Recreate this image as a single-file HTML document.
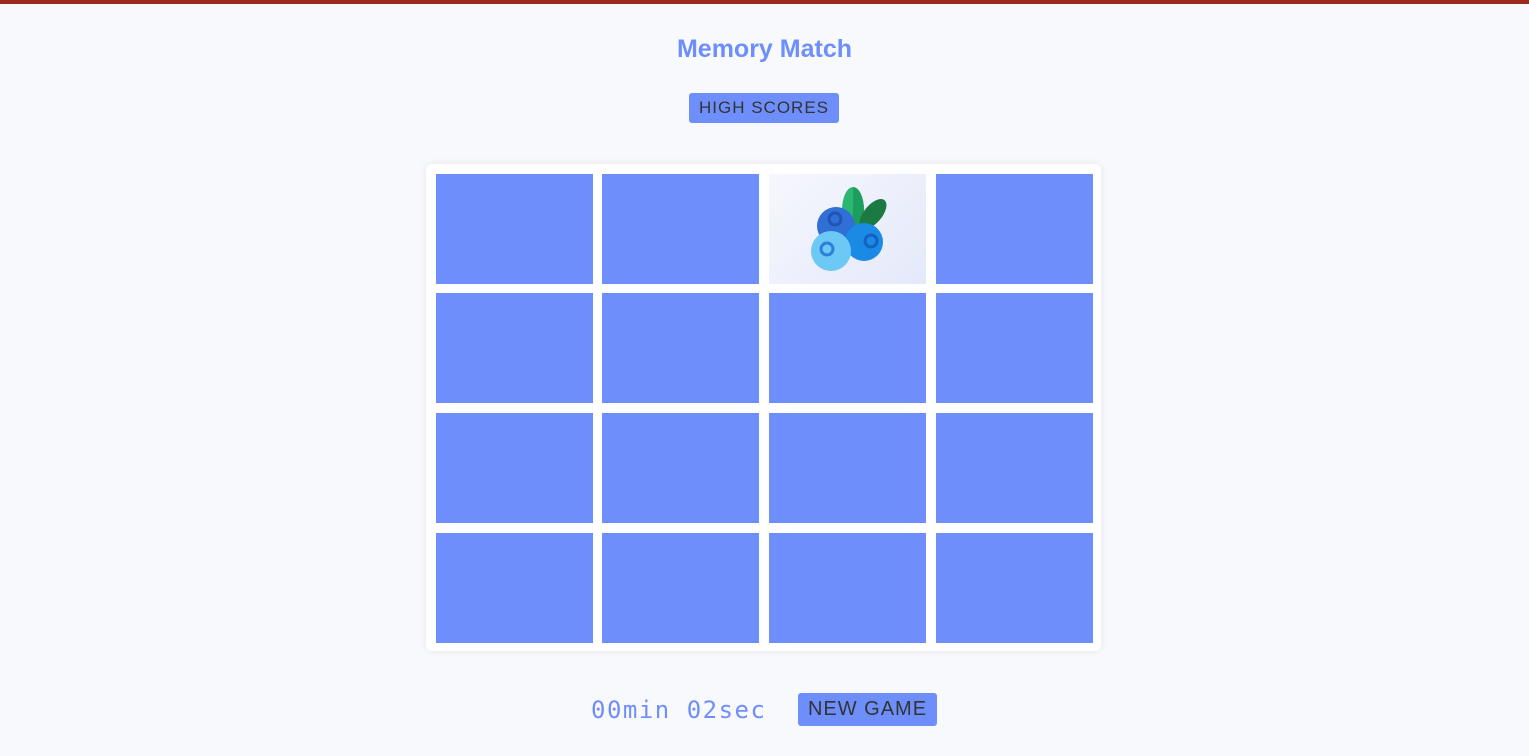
<!DOCTYPE html>
<html><head><meta charset="utf-8"><style>
body{margin:0;width:1529px;height:756px;background:#f8f9fd;font-family:"Liberation Sans",sans-serif;position:relative;overflow:hidden}
.top{position:absolute;left:0;top:0;width:100%;height:4px;background:#9a2b1d}
h1{position:absolute;top:35px;left:0;width:100%;text-align:center;margin:0;font-size:25px;color:#6e8efb;font-weight:bold}
.btn{position:absolute;background:#6e8efb;color:#333;border-radius:3px;text-align:center;letter-spacing:1px}
.board{position:absolute;left:426px;top:164px;width:675px;height:487px;background:#fff;border-radius:6px;box-shadow:0 0 8px rgba(0,0,0,.08)}
.c{position:absolute;width:157px;height:110px;background:#6e8efb}
.timer{position:absolute;left:591px;top:696px;font-family:"DejaVu Sans Mono",monospace;font-size:24px;color:#6e8efb;font-weight:300;letter-spacing:1.5px}
</style></head><body>
<div class="top"></div>
<h1>Memory Match</h1>
<div class="btn" style="left:689px;top:93px;width:150px;height:30px;line-height:30px;font-size:17px">HIGH SCORES</div>
<div class="board">
<div class="c" style="left:10px;top:10px"></div>
<div class="c" style="left:176px;top:10px"></div>
<div class="c" style="left:343px;top:10px;background:linear-gradient(135deg,#f6f7fd,#e4e9fa)">
<svg width="157" height="110" viewBox="0 0 157 110">
<ellipse cx="84" cy="36" rx="11" ry="23" fill="#2bb673"/>
<path d="M84 13 A11 23 0 0 1 84 59Z" fill="#1e9e5e"/>
<ellipse cx="104" cy="40" rx="9" ry="18" transform="rotate(40 104 40)" fill="#1b7a42"/>
<circle cx="67" cy="52" r="19" fill="#2f6fd6"/>
<circle cx="66" cy="45" r="6" fill="none" stroke="#1f55b5" stroke-width="3"/>
<circle cx="95" cy="68" r="19" fill="#1a8ae5"/>
<circle cx="102" cy="67" r="6" fill="none" stroke="#1660c0" stroke-width="3"/>
<circle cx="62" cy="77" r="20" fill="#6cc8f5"/>
<circle cx="58" cy="75" r="6" fill="none" stroke="#2f7fd9" stroke-width="3"/>
</svg></div>
<div class="c" style="left:510px;top:10px"></div>
<div class="c" style="left:10px;top:129px"></div>
<div class="c" style="left:176px;top:129px"></div>
<div class="c" style="left:343px;top:129px"></div>
<div class="c" style="left:510px;top:129px"></div>
<div class="c" style="left:10px;top:249px"></div>
<div class="c" style="left:176px;top:249px"></div>
<div class="c" style="left:343px;top:249px"></div>
<div class="c" style="left:510px;top:249px"></div>
<div class="c" style="left:10px;top:369px"></div>
<div class="c" style="left:176px;top:369px"></div>
<div class="c" style="left:343px;top:369px"></div>
<div class="c" style="left:510px;top:369px"></div>
</div>
<div class="timer">00min 02sec</div>
<div class="btn" style="left:798px;top:693px;width:139px;height:33px;line-height:33px;font-size:20px">NEW GAME</div>
</body></html>
